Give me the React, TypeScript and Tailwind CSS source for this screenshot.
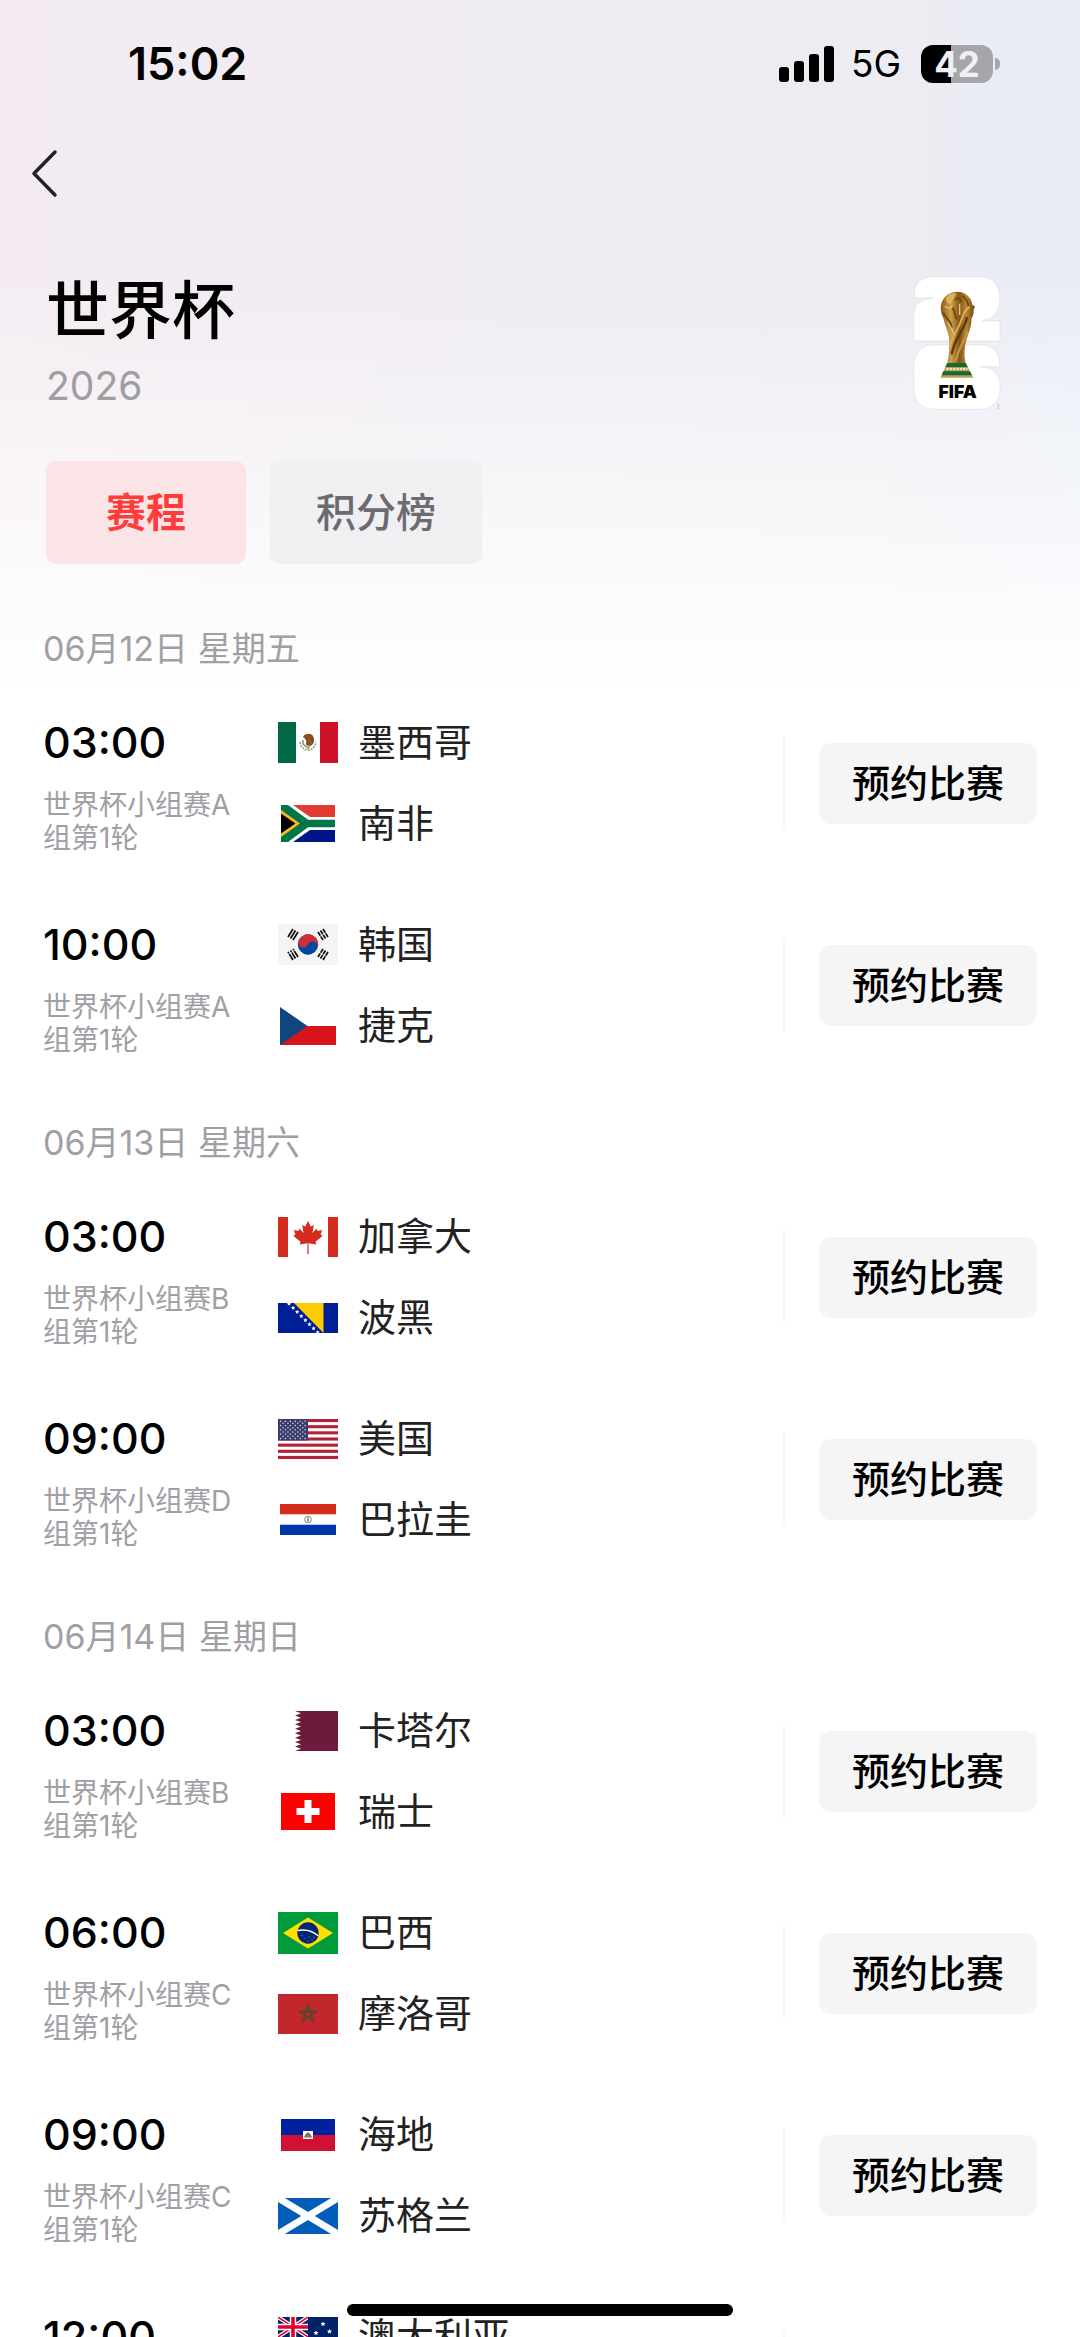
import clsx from 'clsx';
import type { ReactNode } from 'react';

interface Team {
  name: string;
  flag: ReactNode;
}

interface Match {
  time: string;
  stage: string;
  home: Team;
  away: Team;
}

interface MatchDay {
  date: string;
  matches: Match[];
}

interface FlagProps {
  width: number;
  height: number;
  children: ReactNode;
}

const Flag: React.FC<FlagProps> = ({ width, height, children }) => (
  <svg
    width={width}
    height={height}
    viewBox={`0 0 ${width} ${height}`}
    aria-hidden="true"
  >
    {children}
  </svg>
);

const star = (cx: number, cy: number, r: number, inner = 0.382) =>
  Array.from({ length: 10 }, (_, i) => {
    const a = (Math.PI / 5) * i - Math.PI / 2;
    const d = i % 2 ? r * inner : r;
    return `${(cx + d * Math.cos(a)).toFixed(2)},${(cy + d * Math.sin(a)).toFixed(2)}`;
  }).join(' ');

const Mexico = (
  <Flag width={60} height={41}>
    <rect width="60" height="41" fill="#fff" />
    <rect width="18" height="41" fill="#006847" />
    <rect x="42" width="18" height="41" fill="#ce1126" />
    <path d="M22 20c1 5 4 8 8 8s7-3 8-8" fill="none" stroke="#9fb58a" strokeWidth="2" strokeDasharray="2 1" />
    <path d="M25 15c2-4 8-4 10-1 2 4 1 9-3 10-2 0-5-1-4-3 1-1 0-4-3-6z" fill="#8a4a22" />
    <path d="M25 18c-1 3 1 6 4 7M31 17l3 5" fill="none" stroke="#5d7a52" strokeWidth="1.3" />
    <circle cx="30" cy="25" r="2" fill="#c3a96b" />
  </Flag>
);

const SouthAfrica = (
  <Flag width={54} height={37}>
    <rect width="54" height="37" fill="#fff" />
    <path d="M12 0H54V12H29z" fill="#e03c31" />
    <path d="M12 37H54V25H29z" fill="#001489" />
    <path d="M0 0H7L27 14.800H54V22.200H27L7 37H0z" fill="#007749" />
    <path d="M0 5L19 18.500L0 32z" fill="#ffb81c" />
    <path d="M0 8.500L14.500 18.500L0 28.500z" fill="#000" />
  </Flag>
);

const SouthKorea = (
  <Flag width={60} height={41}>
    <rect width="60" height="41" fill="#f5f5f5" />
    <g transform="rotate(25 30 20.500)">
      <circle cx="30" cy="20.500" r="10.200" fill="#0047a0" />
      <path d="M19.800 20.500a10.200 10.200 0 0 1 20.400 0a5.100 5.100 0 0 0-10.200 0a5.100 5.100 0 0 1-10.200 0z" fill="#cd2e3a" />
    </g>
    <g stroke="#111" strokeWidth="1.700">
      <path d="M10 13l5-8M12.500 14.500l5-8M15 16l5-8" />
      <path d="M40 33l5-8M42.500 34.500l5-8M45 36l5-8" strokeDasharray="4.300 .8" />
      <path d="M50 13l-5-8M47.500 14.500l-5-8M45 16l-5-8" strokeDasharray="4.300 .8" />
      <path d="M20 33l-5-8M17.500 34.500l-5-8M15 36l-5-8" strokeDasharray="7 .8" />
    </g>
  </Flag>
);

const Czech = (
  <Flag width={56} height={38}>
    <rect width="56" height="38" fill="#fff" />
    <rect y="19" width="56" height="19" fill="#d7141a" />
    <path d="M0 0L27.500 19L0 38z" fill="#11457e" />
  </Flag>
);

const Canada = (
  <Flag width={60} height={40}>
    <rect width="60" height="40" fill="#fff" />
    <rect width="10" height="40" fill="#d52b1e" />
    <rect x="50" width="10" height="40" fill="#d52b1e" />
    <path
      d="M30 4l2.800 5.500 3-1.500-1.400 8 4.300-4.400.9 2.300 4.500-.8-1.500 4.400 2.200 1.200-7.300 6 .8 2.700-7.800-1.200.2 10.800h-1.400l.2-10.800-7.800 1.200.8-2.700-7.300-6 2.200-1.200-1.500-4.400 4.500.8.9-2.300 4.300 4.400-1.400-8 3 1.500z"
      fill="#d52b1e"
    />
  </Flag>
);

const Bosnia = (
  <Flag width={60} height={30}>
    <rect width="60" height="30" fill="#001f96" />
    <path d="M16 0H45.500V30z" fill="#fecb00" />
    {[0, 1, 2, 3, 4, 5, 6, 7].map((i) => (
      <polygon key={i} points={star(11 + i * 4.1, 0.8 + i * 4.1, 2.2, 0.5)} fill="#fff" />
    ))}
  </Flag>
);

const Usa = (
  <Flag width={60} height={40}>
    <rect width="60" height="40" fill="#fff" />
    {[0, 1, 2, 3, 4, 5, 6].map((i) => (
      <rect key={i} y={i * 6.15} width="60" height="3.100" fill="#b22234" />
    ))}
    <rect width="30" height="21.500" fill="#3c3b6e" />
    {Array.from({ length: 9 }, (_, row) =>
      Array.from({ length: row % 2 ? 5 : 6 }, (_, col) => (
        <circle
          key={`${row}-${col}`}
          cx={2.6 + col * 4.9 + (row % 2 ? 2.45 : 0)}
          cy={2.2 + row * 2.15}
          r=".75"
          fill="#dfe0ea"
        />
      ))
    )}
  </Flag>
);

const Paraguay = (
  <Flag width={56} height={31}>
    <rect width="56" height="31" fill="#fff" />
    <rect width="56" height="10.300" fill="#d52b1e" />
    <rect y="20.700" width="56" height="10.300" fill="#0038a8" />
    <circle cx="28" cy="15.500" r="3.400" fill="#f1f1f1" stroke="#8d8d8d" strokeWidth="1" />
    <path d="M28 13.500v4" stroke="#7c8a5a" strokeWidth="1.500" />
  </Flag>
);

const Qatar = (
  <Flag width={60} height={40}>
    <rect width="60" height="40" fill="#fff" />
    <path
      d="M60 0H17L23 2.200L17 4.400L23 6.700L17 8.900L23 11.100L17 13.300L23 15.600L17 17.800L23 20L17 22.200L23 24.400L17 26.700L23 28.900L17 31.100L23 33.300L17 35.600L23 37.800L17 40H60z"
      fill="#6d1a3d"
    />
  </Flag>
);

const Switzerland = (
  <Flag width={54} height={37}>
    <rect width="54" height="37" fill="#f00" />
    <path d="M23.500 7h7v8h8v7h-8v8h-7v-8h-8v-7h8z" fill="#fff" />
  </Flag>
);

const Brazil = (
  <Flag width={60} height={42}>
    <rect width="60" height="42" fill="#009b3a" />
    <path d="M5 21L30 5.500L55 21L30 36.500z" fill="#fedf00" />
    <circle cx="30" cy="21" r="10.700" fill="#002776" />
    <path d="M19.700 18.500c7-1.500 15 .5 20.500 5.300" fill="none" stroke="#fff" strokeWidth="1.500" />
    <g fill="#8fa0cb">
      <circle cx="24" cy="23.500" r=".6" />
      <circle cx="27" cy="26.500" r=".6" />
      <circle cx="31" cy="25" r=".6" />
      <circle cx="34" cy="28" r=".6" />
      <circle cx="30" cy="29" r=".6" />
      <circle cx="36" cy="25" r=".6" />
    </g>
  </Flag>
);

const Morocco = (
  <Flag width={60} height={40}>
    <rect width="60" height="40" fill="#c1272d" />
    <path d="M30 11.500L35.200 27.300L21.700 17.500H38.300L24.800 27.300z" fill="none" stroke="#4a4a2c" strokeWidth="1.500" />
  </Flag>
);

const Haiti = (
  <Flag width={54} height={32}>
    <rect width="54" height="16" fill="#00209f" />
    <rect y="16" width="54" height="16" fill="#d21034" />
    <rect x="22" y="12" width="10" height="8" fill="#fff" />
    <path d="M23 18.500c1-3 2.500-5 4-5s3 2 4 5z" fill="#6b7560" />
    <path d="M25 17h4" stroke="#a5763f" strokeWidth="1.500" />
  </Flag>
);

const Scotland = (
  <Flag width={60} height={36}>
    <rect width="60" height="36" fill="#005eb8" />
    <path d="M0 0L60 36M60 0L0 36" stroke="#fff" strokeWidth="7" />
  </Flag>
);

const Australia = (
  <Flag width={60} height={40}>
    <rect width="60" height="40" fill="#012169" />
    <svg width="30" height="20" viewBox="0 0 30 20">
      <path d="M0 0L30 20M30 0L0 20" stroke="#fff" strokeWidth="4" />
      <path d="M0 0L30 20M30 0L0 20" stroke="#e4002b" strokeWidth="1.500" />
      <path d="M15 0V20M0 10H30" stroke="#fff" strokeWidth="6.500" />
      <path d="M15 0V20M0 10H30" stroke="#e4002b" strokeWidth="3.600" />
    </svg>
    <g fill="#fff">
      <polygon points={star(45, 7, 2.6, 0.5)} />
      <polygon points={star(38, 16, 2.6, 0.5)} />
      <polygon points={star(51.5, 14.5, 2.6, 0.5)} />
      <polygon points={star(47, 22, 1.6, 0.5)} />
      <polygon points={star(45, 34, 2.6, 0.5)} />
      <polygon points={star(15, 30, 4.5, 0.5)} />
    </g>
  </Flag>
);

const Turkey = (
  <Flag width={60} height={40}>
    <rect width="60" height="40" fill="#e30a17" />
    <circle cx="22" cy="20" r="10" fill="#fff" />
    <circle cx="24.500" cy="20" r="8" fill="#e30a17" />
    <polygon points={star(35, 20, 5)} fill="#fff" />
  </Flag>
);

const schedule: MatchDay[] = [
  {
    date: '06月12日 星期五',
    matches: [
      {
        time: '03:00',
        stage: '世界杯小组赛A组第1轮',
        home: { name: '墨西哥', flag: Mexico },
        away: { name: '南非', flag: SouthAfrica },
      },
      {
        time: '10:00',
        stage: '世界杯小组赛A组第1轮',
        home: { name: '韩国', flag: SouthKorea },
        away: { name: '捷克', flag: Czech },
      },
    ],
  },
  {
    date: '06月13日 星期六',
    matches: [
      {
        time: '03:00',
        stage: '世界杯小组赛B组第1轮',
        home: { name: '加拿大', flag: Canada },
        away: { name: '波黑', flag: Bosnia },
      },
      {
        time: '09:00',
        stage: '世界杯小组赛D组第1轮',
        home: { name: '美国', flag: Usa },
        away: { name: '巴拉圭', flag: Paraguay },
      },
    ],
  },
  {
    date: '06月14日 星期日',
    matches: [
      {
        time: '03:00',
        stage: '世界杯小组赛B组第1轮',
        home: { name: '卡塔尔', flag: Qatar },
        away: { name: '瑞士', flag: Switzerland },
      },
      {
        time: '06:00',
        stage: '世界杯小组赛C组第1轮',
        home: { name: '巴西', flag: Brazil },
        away: { name: '摩洛哥', flag: Morocco },
      },
      {
        time: '09:00',
        stage: '世界杯小组赛C组第1轮',
        home: { name: '海地', flag: Haiti },
        away: { name: '苏格兰', flag: Scotland },
      },
      {
        time: '12:00',
        stage: '世界杯小组赛D组第1轮',
        home: { name: '澳大利亚', flag: Australia },
        away: { name: '土耳其', flag: Turkey },
      },
    ],
  },
];

const StatusBar = () => (
  <div className="flex items-center justify-between pt-[34px] pr-20 pl-32 text-black">
    <span className="text-[45px] leading-[60px] font-semibold">15:02</span>
    <div className="flex items-center">
      <svg width="56" height="36" viewBox="0 0 56 36" aria-hidden="true">
        <rect x="0" y="21" width="10" height="15" rx="3" />
        <rect x="15" y="15" width="10" height="21" rx="3" />
        <rect x="30" y="8" width="10" height="28" rx="3" />
        <rect x="45" y="0" width="10" height="36" rx="3" />
      </svg>
      <span className="ml-4 text-[37px] leading-[60px]">5G</span>
      <div className="ml-5 flex items-center gap-0.5">
        <div className="flex h-[38px] w-[72px] items-center justify-center rounded-xl bg-[linear-gradient(to_right,#000_42%,#a5a6aa_42%)] text-[35px] leading-[38px] font-bold text-[#f0f0f4]">
          42
        </div>
        <div className="h-3 w-[5px] rounded-r-full bg-[#a5a6aa]" />
      </div>
    </div>
  </div>
);

const CupLogo = () => (
  <svg width="88" height="134" viewBox="100 77 264 402" role="img" aria-label="FIFA 2026">
    <defs>
      <linearGradient id="gold" x1="0" x2="1" y1="0" y2="0">
        <stop offset="0" stopColor="#8a5c1c" />
        <stop offset=".3" stopColor="#cf9f48" />
        <stop offset=".55" stopColor="#85561a" />
        <stop offset=".75" stopColor="#b98633" />
        <stop offset="1" stopColor="#6a4212" />
      </linearGradient>
    </defs>
    <g fill="#fff" stroke="#dcdde3" strokeWidth="2">
      <path d="M104 143V125Q110 79 160 79H308Q360 84 361 145Q360 204 308 211H361V272H102V190Q106 146 160 143z" />
      <path d="M160 283H310Q352 286 360 330V349H302Q360 352 362 405V415Q358 476 300 477H160Q104 475 102 415V345Q106 286 160 283z" />
    </g>
    {/* Trophy */}
    <path
      d="M233 124C204 124 183 146 183 175C184 190 188 198 192 206C196 226 204 240 208 262C210 286 208 314 203 338H258C252 316 254 290 262 264C270 240 276 224 275 206C281 196 282 188 282 178L286 168L278 164C276 142 258 124 233 124z"
      fill="url(#gold)"
    />
    <path d="M200 142c8-10 20-13 30-12-8 10-10 24-18 30-8 2-16-8-12-18z" fill="#dcb25c" />
    <path d="M226 150c8-10 14-8 20 4M248 136c8 6 16 16 18 30" fill="none" stroke="#6b4513" strokeWidth="5" />
    <path d="M190 186c10 20 24 24 26 46M218 172c10 10 4 24 14 34" fill="none" stroke="#6f4814" strokeWidth="6" />
    <path d="M270 170c-18 8-20 30-30 52-12 26-26 44-30 70" fill="none" stroke="#d9ad58" strokeWidth="6" />
    <path d="M262 200c-6 40-36 56-46 112" fill="none" stroke="#5b390e" strokeWidth="7" />
    <path d="M264 244c-14 30-26 50-36 88" fill="none" stroke="#c99a42" strokeWidth="6" />
    <path d="M196 168c8 8 16 6 22 0M240 160v34M204 216c6 12 16 18 18 36" fill="none" stroke="#e6c277" strokeWidth="4" />
    <path d="M203 338H258L281 382H182z" fill="#c39a4c" />
    <path d="M203 338H258L264 350H197z" fill="#0f6a3c" />
    <path d="M191 363H271L277 375H186z" fill="#0f6a3c" />
    <path d="M200 356H264" stroke="#f1e3bd" strokeWidth="6" strokeDasharray="7 3" />
    <text
      x="234"
      y="443"
      textAnchor="middle"
      className="font-['Inter',sans-serif] text-[53px] font-black"
      fill="#000"
    >
      FIFA
    </text>
    <path d="M356 462v8M354 474h5" stroke="#b9bac0" strokeWidth="3" />
  </svg>
);

const TeamRow: React.FC<Team> = ({ name, flag }) => (
  <div className="flex items-center">
    <div className="flex w-[60px] justify-center">{flag}</div>
    <span className="ml-5 text-[38px] leading-[81px] text-[#222]">{name}</span>
  </div>
);

const MatchRow: React.FC<Match> = ({ time, stage, home, away }) => (
  <li className="flex items-center py-[29px]">
    <div className="w-[200px] shrink-0">
      <div className="text-[43px] leading-[62px] font-medium text-black">{time}</div>
      <div className="mt-4 text-[28px] leading-[33px] break-all text-[#a0a0a4]">{stage}</div>
    </div>

    {/* Teams */}
    <div className="-my-3 ml-[35px] flex-1">
      <TeamRow {...home} />
      <TeamRow {...away} />
    </div>

    <div className="h-[92px] w-0.5 bg-[#f5f5f6]" />
    <button
      type="button"
      className="ml-[34px] h-[81px] rounded-xl bg-[#f5f5f5] px-[33px] text-[38px] leading-[81px] font-medium text-black"
    >
      预约比赛
    </button>
  </li>
);

const tabs = ['赛程', '积分榜'];

export default function App() {
  return (
    <div
      lang="zh-CN"
      className="relative h-screen overflow-hidden bg-white font-['Inter','Noto_Sans_CJK_SC',sans-serif]"
    >
      <div className="h-full overflow-y-auto bg-[linear-gradient(to_bottom,rgba(255,255,255,0)_280px,#fff_690px),linear-gradient(to_right,#f4ecf2,#f1ecf2_30%,#eeecf2_55%,#edecf2_82%,#e8edf6)] [scrollbar-width:none]">
        <StatusBar />

        <header className="px-[46px]">
          <button type="button" aria-label="返回" className="-ml-4 mt-[53px] block h-[52px]">
            <svg width="30" height="52" viewBox="0 0 30 52" fill="none" aria-hidden="true">
              <path
                d="M25 5L4 26.500L25 48"
                stroke="#222"
                strokeWidth="3.500"
                strokeLinecap="round"
                strokeLinejoin="round"
              />
            </svg>
          </button>

          <div className="mt-[73px] flex items-center justify-between pr-[33px]">
            <div>
              <h1 className="text-[63px] leading-[76px] font-medium text-black">世界杯</h1>
              <p className="mt-2.5 text-[39px] leading-[56px] text-[#9d9da2]">2026</p>
            </div>
            <CupLogo />
          </div>

          {/* Tabs */}
          <nav className="mt-[47px] flex gap-6">
            {tabs.map((tab, index) => (
              <button
                key={tab}
                type="button"
                className={clsx(
                  'min-w-[200px] rounded-[10px] px-[46px] text-[40px] leading-[103px]',
                  index === 0
                    ? 'bg-[#fae4e6] font-bold text-[#ff3b3b]'
                    : 'bg-[#f0f0f2] font-medium text-[#6c6c70]'
                )}
              >
                {tab}
              </button>
            ))}
          </nav>
        </header>

        <main className="mt-[52px] px-[43px]">
          {schedule.map((day) => (
            <section key={day.date} className="pb-6">
              <h2 className="text-[34px] leading-[66px] text-[#a0a0a4]">{day.date}</h2>
              <ul>
                {day.matches.map((match) => (
                  <MatchRow key={match.home.name} {...match} />
                ))}
              </ul>
            </section>
          ))}
        </main>
      </div>

      {/* Home indicator */}
      <div className="absolute bottom-[21px] left-1/2 h-3 w-[386px] -translate-x-1/2 rounded-full bg-black" />
    </div>
  );
}
